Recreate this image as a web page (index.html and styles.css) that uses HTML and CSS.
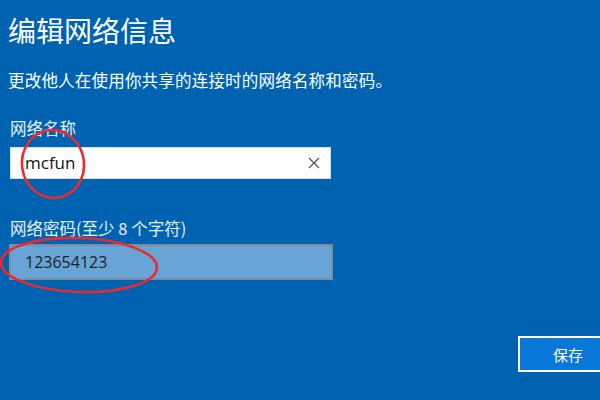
FILE: index.html
```html
<!DOCTYPE html>
<html lang="zh-CN">
<head>
    <meta charset="UTF-8">
    <meta name="viewport" content="width=device-width, initial-scale=1.0">
    <title>编辑网络信息</title>
    <link rel="stylesheet" href="styles.css">
</head>
<body>
    <div class="panel">
        <h1 class="title">编辑网络信息</h1>
        <p class="subtitle">更改他人在使用你共享的连接时的网络名称和密码。</p>

        <label class="field-label" for="net-name">网络名称</label>
        <div class="name-box">
            <span class="name-value" id="net-name">mcfun</span>
            <span class="clear-btn">
                <svg width="12" height="12" viewBox="0 0 12 12">
                    <path d="M1 1 L11 11 M11 1 L1 11" stroke="#555" stroke-width="1.3" fill="none"/>
                </svg>
            </span>
        </div>

        <label class="field-label pass-label" for="net-pass">网络密码(至少 8 个字符)</label>
        <div class="pass-box">
            <span class="pass-value" id="net-pass">123654123</span>
        </div>

        <div class="actions">
            <button type="button" class="save-button">保存</button>
        </div>
    </div>

    <!-- 红色标注圈 -->
    <svg class="marks" width="600" height="400" viewBox="0 0 600 400">
        <ellipse cx="53" cy="164" rx="31" ry="34" transform="rotate(-8 53 164)" stroke="#ec2a2e" stroke-width="2.6" fill="none"/>
        <ellipse cx="79" cy="265" rx="78" ry="27" transform="rotate(2 79 265)" stroke="#ec2a2e" stroke-width="2.6" fill="none"/>
    </svg>
</body>
</html>
```

FILE: styles.css
```css
body {
    margin: 0;
    width: 600px;
    height: 400px;
    overflow: hidden;
    background-color: #0063b1;
    font-family: "Noto Sans CJK SC", "Liberation Sans", sans-serif;
    color: #ffffff;
    position: relative;
}

.panel {
    padding: 10px 0 0 10px;
}

.title {
    margin: 0 0 0 -2px;
    font-size: 28px;
    font-weight: 400;
    line-height: 40px;
}

.subtitle {
    margin: 19px 0 0 -2px;
    font-size: 16.5px;
    letter-spacing: 0.2px;
    line-height: 22px;
}

.field-label {
    display: block;
    margin-top: 26px;
    font-size: 16.5px;
    line-height: 22px;
    color: #e8eef6;
}

.pass-label {
    margin-top: 38px;
}

.name-box {
    display: flex;
    align-items: center;
    justify-content: space-between;
    box-sizing: border-box;
    width: 321px;
    height: 32px;
    margin-top: 8px;
    background: #ffffff;
    border: 1px solid #cfe2f3;
    padding: 0 10px 0 14px;
}

.name-value {
    font-family: "Open Sans", "Liberation Sans", sans-serif;
    font-size: 17px;
    color: #111;
    margin-top: -2px;
}

.clear-btn {
    display: flex;
}

.pass-box {
    display: flex;
    align-items: center;
    box-sizing: border-box;
    width: 324px;
    height: 36px;
    margin: 5px 0 0 -1px;
    background: #68a5d6;
    border: 2px solid #7f8c99;
    padding: 0 14px;
}

.pass-value {
    font-family: "Open Sans", "Liberation Sans", sans-serif;
    font-size: 16px;
    color: #1a1f26;
}

.actions {
    display: flex;
    justify-content: flex-end;
    margin-top: 56px;
}

.save-button {
    width: 92px;
    height: 36px;
    margin-right: -10px;
    background: #0a78d8;
    border: 2px solid #ffffff;
    color: #ffffff;
    font-family: "Noto Sans CJK SC", sans-serif;
    font-size: 15px;
    text-align: left;
    padding: 0 0 0 33px;
}

.marks {
    position: absolute;
    left: 0;
    top: 0;
    pointer-events: none;
}
```
